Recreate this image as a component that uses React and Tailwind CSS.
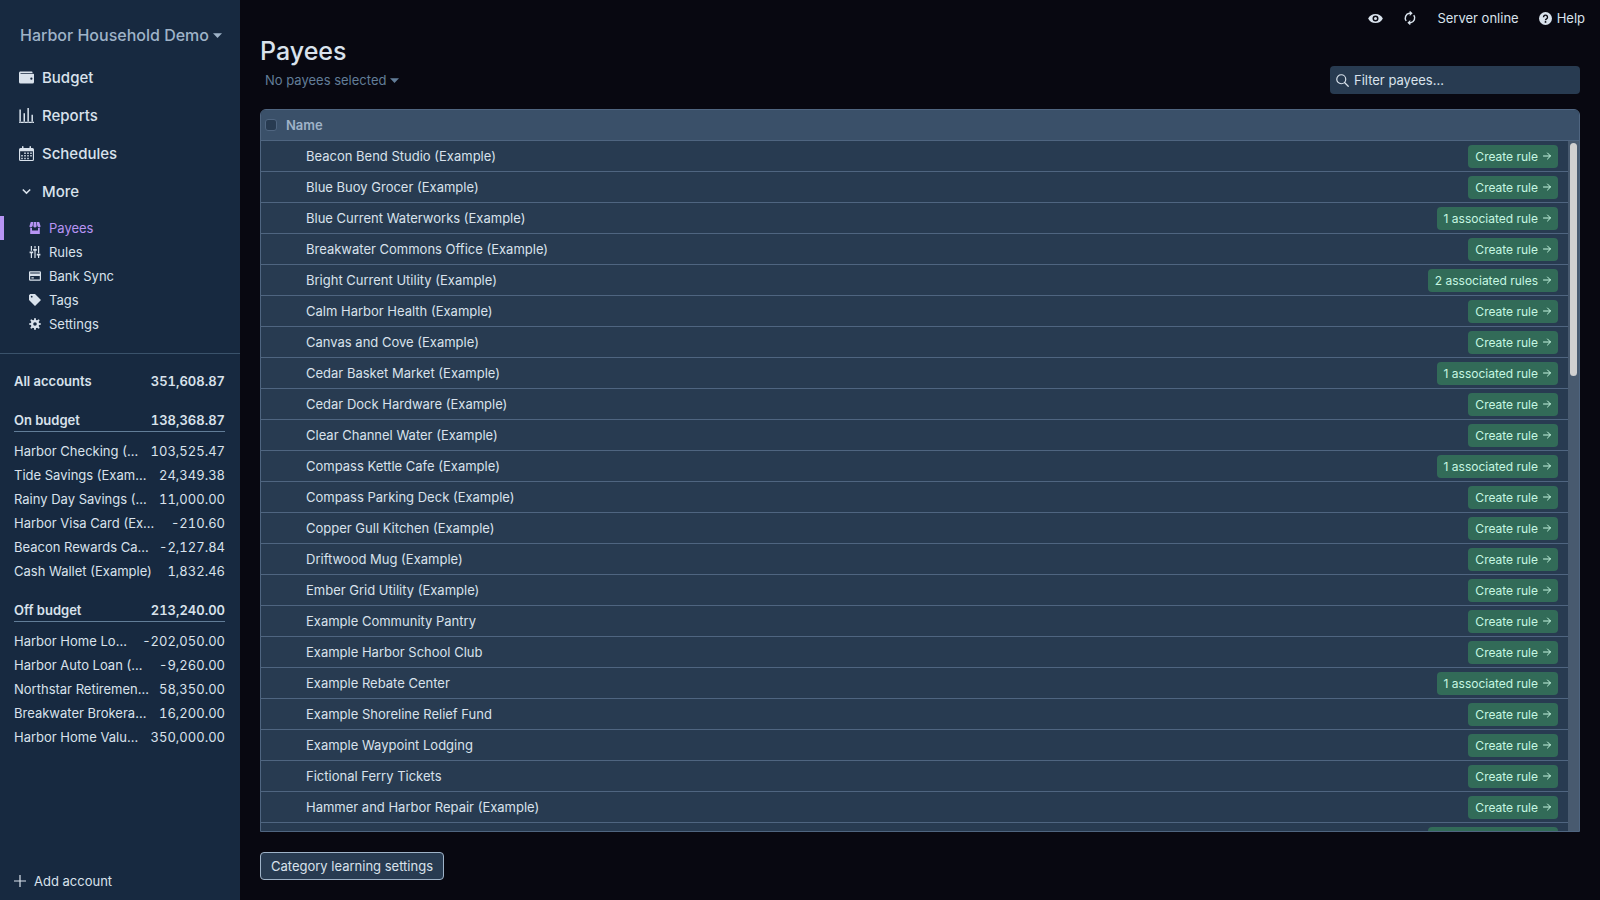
const icons = {
  wallet:
    'M0 4c0-1.1.9-2 2-2h15a1 1 0 0 1 1 1v1H2v1h17a1 1 0 0 1 1 1v10a2 2 0 0 1-2 2H2a2 2 0 0 1-2-2V4zm16.5 9a1.5 1.5 0 1 0 0-3 1.5 1.5 0 0 0 0 3z',
  reports:
    'M0 18.200h20V20H0zM.5 2h2v17h-2zM6 7h2v12H6zM11.200 0h2v19h-2zM16.600 9h2v10h-2z',
  calendar:
    'M5 0a1 1 0 0 1 1 1v1.500h8V1a1 1 0 0 1 2 0v1.500h2a2 2 0 0 1 2 2V18a2 2 0 0 1-2 2H2a2 2 0 0 1-2-2V4.500a2 2 0 0 1 2-2h2V1a1 1 0 0 1 1-1zM1.500 7v11a.5.5 0 0 0 .5.5h16a.5.5 0 0 0 .5-.5V7zM7 8.500h2v2H7zM11 8.500h2v2h-2zM15 8.500h2v2h-2zM3 12h2v2H3zM7 12h2v2H7zM11 12h2v2h-2zM15 12h2v2h-2zM3 15.500h2v2H3zM7 15.500h2v2H7zM11 15.500h2v2h-2z',
  chevron: 'M9.293 12.95l.707.707L15.657 8l-1.414-1.414L10 10.828 5.757 6.586 4.343 8z',
  store:
    'M18 9.87V20H2V9.87a4.25 4.25 0 0 0 3-.38V14h10V9.5a4.26 4.26 0 0 0 3 .37zM3 0h4l-.67 6.03A3.43 3.43 0 0 1 3 9C1.34 9 .42 7.73.95 6.15L3 0zm5 0h4l.7 6.3c.17 1.5-.91 2.7-2.42 2.7h-.56A2.38 2.38 0 0 1 7.3 6.3L8 0zm5 0h4l2.05 6.15C19.58 7.73 18.65 9 17 9a3.42 3.42 0 0 1-3.33-2.97L13 0z',
  tuning:
    'M17 16v4h-2v-4h-2v-3h6v3h-2zM1 9h6v3H1V9zm6-4h6v3H7V5zM3 0h2v8H3V0zm12 0h2v12h-2V0zM9 0h2v4H9V0zM3 12h2v8H3v-8zm6-4h2v12H9V8z',
  card: 'M18 6V4H2v2h16zm0 4H2v6h16v-6zM0 4c0-1.1.9-2 2-2h16a2 2 0 0 1 2 2v12a2 2 0 0 1-2 2H2a2 2 0 0 1-2-2V4zm4 8h4v2H4v-2z',
  tag: 'M0 10V2l2-2h8l10 10-10 10L0 10zm4.5-4a1.5 1.5 0 1 0 0-3 1.5 1.5 0 0 0 0 3z',
  cog: 'M3.94 6.5L2.22 3.64l1.42-1.42L6.5 3.94c.52-.3 1.1-.54 1.7-.7L9 0h2l.8 3.24c.6.16 1.18.4 1.7.7l2.86-1.72 1.42 1.42-1.72 2.86c.3.52.54 1.1.7 1.7L20 9v2l-3.24.8c-.16.6-.4 1.18-.7 1.7l1.72 2.86-1.42 1.42-2.86-1.72c-.52.3-1.1.54-1.7.7L11 20H9l-.8-3.24c-.6-.16-1.18-.4-1.7-.7l-2.86 1.72-1.42-1.42 1.72-2.86c-.3-.52-.54-1.1-.7-1.7L0 11V9l3.24-.8c.16-.6.4-1.18.7-1.7zM10 13a3 3 0 1 0 0-6 3 3 0 0 0 0 6z',
  eye: 'M.2 10a11 11 0 0 1 19.6 0A11 11 0 0 1 .2 10zm9.8 4a4 4 0 1 0 0-8 4 4 0 0 0 0 8zm0-2a2 2 0 1 1 0-4 2 2 0 0 1 0 4z',
  plus: 'M9 0h2v9h9v2h-9v9H9v-9H0V9h9z',
  caret: 'M0 5h20L10 15.500z',
};

function Icon({ name, className }) {
  return (
    <svg viewBox="0 0 20 20" fill="currentColor" fillRule="evenodd" aria-hidden="true" className={`shrink-0 ${className}`}>
      <path d={icons[name]} />
    </svg>
  );
}

function SyncIcon() {
  return (
    <svg viewBox="0 0 24 24" fill="none" stroke="currentColor" strokeWidth="2.600" aria-hidden="true" className="size-[14px] shrink-0">
      <path d="M5.500 17A8.200 8.200 0 0 1 11 4H13M18.500 7A8.200 8.200 0 0 1 13 20H11" />
      <path d="M11.500 -.5l5 4.500-5 4.500zM12.500 15.500l-5 4.500 5 4.500z" fill="currentColor" stroke="none" />
    </svg>
  );
}

function HelpIcon() {
  return (
    <svg viewBox="0 0 24 24" aria-hidden="true" className="size-[13px] shrink-0">
      <circle cx="12" cy="12" r="12" fill="currentColor" />
      <path d="M8.300 9.500a3.700 3.700 0 1 1 5.600 3.200c-1.200.7-1.900 1.300-1.900 2.600" fill="none" stroke="#080811" strokeWidth="2.600" />
      <circle cx="12" cy="18.300" r="1.700" fill="#080811" />
    </svg>
  );
}

function SearchIcon() {
  return (
    <svg viewBox="0 0 26 26" fill="none" stroke="currentColor" strokeWidth="2.400" strokeLinecap="round" aria-hidden="true" className="size-[13px] shrink-0">
      <circle cx="10.500" cy="10.500" r="9" />
      <path d="M17 17l7.500 7.500" />
    </svg>
  );
}

function ArrowIcon() {
  return (
    <svg viewBox="0 0 16 16" fill="none" stroke="currentColor" strokeWidth="2" strokeLinecap="round" strokeLinejoin="round" aria-hidden="true" className="size-[8px] shrink-0">
      <path d="M1 8h14M9 2l6 6-6 6" />
    </svg>
  );
}

const mainNav = [
  ['wallet', 'Budget'],
  ['reports', 'Reports'],
  ['calendar', 'Schedules'],
];

const moreNav = [
  ['store', 'Payees'],
  ['tuning', 'Rules'],
  ['card', 'Bank Sync'],
  ['tag', 'Tags'],
  ['cog', 'Settings'],
];

const groups = [
  {
    name: 'On budget',
    total: '138,368.87',
    accounts: [
      ['Harbor Checking (Example)', '103,525.47'],
      ['Tide Savings (Example)', '24,349.38'],
      ['Rainy Day Savings (Example)', '11,000.00'],
      ['Harbor Visa Card (Example)', '-210.60'],
      ['Beacon Rewards Card (Example)', '-2,127.84'],
      ['Cash Wallet (Example)', '1,832.46'],
    ],
  },
  {
    name: 'Off budget',
    total: '213,240.00',
    accounts: [
      ['Harbor Home Loan (Example)', '-202,050.00'],
      ['Harbor Auto Loan (Example)', '-9,260.00'],
      ['Northstar Retirement (Example)', '58,350.00'],
      ['Breakwater Brokerage (Example)', '16,200.00'],
      ['Harbor Home Value (Example)', '350,000.00'],
    ],
  },
];

const payees = [
  ['Beacon Bend Studio (Example)', 0],
  ['Blue Buoy Grocer (Example)', 0],
  ['Blue Current Waterworks (Example)', 1],
  ['Breakwater Commons Office (Example)', 0],
  ['Bright Current Utility (Example)', 2],
  ['Calm Harbor Health (Example)', 0],
  ['Canvas and Cove (Example)', 0],
  ['Cedar Basket Market (Example)', 1],
  ['Cedar Dock Hardware (Example)', 0],
  ['Clear Channel Water (Example)', 0],
  ['Compass Kettle Cafe (Example)', 1],
  ['Compass Parking Deck (Example)', 0],
  ['Copper Gull Kitchen (Example)', 0],
  ['Driftwood Mug (Example)', 0],
  ['Ember Grid Utility (Example)', 0],
  ['Example Community Pantry', 0],
  ['Example Harbor School Club', 0],
  ['Example Rebate Center', 1],
  ['Example Shoreline Relief Fund', 0],
  ['Example Waypoint Lodging', 0],
  ['Fictional Ferry Tickets', 0],
  ['Hammer and Harbor Repair (Example)', 0],
  ['', 2],
];

function ruleLabel(count) {
  if (count === 0) return 'Create rule';
  return count === 1 ? '1 associated rule' : `${count} associated rules`;
}

function AccountRow({ name, amount, className }) {
  return (
    <a href="#" className={`flex items-center gap-[10px] pt-0.5 pr-[15px] pl-[14px] ${className}`}>
      <span className="min-w-0 flex-1 truncate">{name}</span>
      <span className="tabular-nums">{amount}</span>
    </a>
  );
}

function Sidebar() {
  return (
    <aside className="flex w-60 shrink-0 flex-col bg-[#172940] text-[#d9e2ec]">
      <button type="button" className="mt-[23px] flex h-6 items-center gap-1 self-start px-5 text-base font-medium text-[#9fb3c8]">
        <span className="whitespace-nowrap">Harbor Household Demo</span>
        <Icon name="caret" className="size-[9px]" />
      </button>
      <nav className="mt-3 flex flex-col">
        {mainNav.map(([icon, label]) => (
          <a key={label} href="#" className="flex h-[38px] items-center gap-2 px-[19px] text-[15px] font-medium">
            <Icon name={icon} className="mb-px size-[15px]" />
            {label}
          </a>
        ))}
        <button type="button" className="flex h-[38px] items-center gap-2 px-[19px] text-[15px] font-medium">
          <Icon name="chevron" className="mb-px size-[15px]" />
          More
        </button>
        <div className="mt-[5px] flex flex-col">
          {moreNav.map(([icon, label]) => (
            <a
              key={label}
              href="#"
              className={`flex h-6 items-center gap-2 border-l-4 pl-[25px] text-[13px] ${
                label === 'Payees' ? 'border-[#b794f4] text-[#b794f4]' : 'border-transparent'
              }`}
            >
              <Icon name={icon} className="size-[12px]" />
              <span className="pt-0.5">{label}</span>
            </a>
          ))}
        </div>
      </nav>
      <div className="mt-[17px] border-t border-[#3a526b] pt-[15px] text-[13px]">
        <AccountRow name="All accounts" amount="351,608.87" className="h-6 font-semibold" />
        {groups.map((group) => (
          <section key={group.name} className="mt-[15px]">
            <AccountRow name={group.name} amount={group.total} className="h-[23px] font-semibold" />
            <div className="mr-[15px] mb-[7px] ml-[14px] border-t border-[#627d98]" />
            {group.accounts.map(([name, amount]) => (
              <AccountRow key={name} name={name} amount={amount} className="h-6" />
            ))}
          </section>
        ))}
      </div>
      <button type="button" className="mt-auto mb-[7px] flex h-6 items-center gap-2 self-start px-[14px] text-[13px]">
        <Icon name="plus" className="size-[12px]" />
        <span className="pt-0.5">Add account</span>
      </button>
    </aside>
  );
}

function PayeeTable() {
  return (
    <div className="relative flex min-h-0 flex-1 flex-col overflow-hidden rounded-t-md border border-[#4f6580] bg-[#283b51]">
      <table className="flex min-h-0 flex-1 flex-col text-left text-[13px]">
        <thead className="block">
          <tr className="flex h-[31px] items-center border-b border-[#4f6580] bg-[#3a5069] text-[#9fb3c8]">
            <th className="flex w-[25px] pl-[4px]">
              <input
                type="checkbox"
                aria-label="Select all payees"
                className="size-[12px] appearance-none rounded-[3px] border border-[#4f6580] bg-[#283b51]"
              />
            </th>
            <th className="pt-0.5 font-semibold">Name</th>
          </tr>
        </thead>
        <tbody className="block min-h-0 flex-1 overflow-hidden pr-[11px] text-[#d9e2ec]">
          {payees.map(([name, count]) => (
            <tr key={name} className="flex h-[31px] items-center border-b border-[#4f6580] pr-[10px] pl-[45px]">
              <td className="min-w-0 flex-1 truncate pt-0.5">{name}</td>
              <td>
                <button
                  type="button"
                  className="flex h-[23px] items-center gap-[5px] rounded bg-[#326b58] px-[7px] text-[12px] text-[#c6f7e2]"
                >
                  <span className="pt-0.5">{ruleLabel(count)}</span>
                  <ArrowIcon />
                </button>
              </td>
            </tr>
          ))}
        </tbody>
      </table>
      <div className="absolute top-[31px] right-0 bottom-0 w-[11px] bg-[#485a6f] px-[2px] pt-[2px]">
        <div className="h-[233px] rounded-full bg-[#d0d0d0]" />
      </div>
    </div>
  );
}

export default function App() {
  return (
    <div className="flex h-screen bg-[#080811] font-['Inter',sans-serif] text-[13px] text-[#d9e2ec]">
      <Sidebar />
      <main className="flex min-w-0 flex-1 flex-col px-5 pb-5">
        <header className="-mr-[5px] flex h-9 items-center justify-end text-[13px]">
          <button type="button" aria-label="Privacy mode" className="mr-5">
            <Icon name="eye" className="size-[15px]" />
          </button>
          <button type="button" aria-label="Sync" className="mr-5">
            <SyncIcon />
          </button>
          <button type="button" className="mr-5 pt-0.5">Server online</button>
          <button type="button" className="flex items-center gap-[5px]">
            <HelpIcon />
            <span className="pt-0.5">Help</span>
          </button>
        </header>
        <h1 className="h-[30px] text-[25px] leading-[30px] font-medium">Payees</h1>
        <div className="mb-[15px] flex h-7 items-center justify-between">
          <button type="button" className="flex items-center gap-1 pl-[5px] text-[#627d98]">
            <span className="pt-0.5">No payees selected</span>
            <Icon name="caret" className="size-[9px]" />
          </button>
          <label className="flex h-7 w-[250px] items-center gap-[5px] rounded bg-[#283b51] px-[6px]">
            <SearchIcon />
            <input
              type="text"
              aria-label="Filter payees"
              placeholder="Filter payees..."
              className="min-w-0 flex-1 bg-transparent pt-0.5 outline-none placeholder:text-[#d9e2ec]"
            />
          </label>
        </div>
        <PayeeTable />
        <button type="button" className="mt-5 h-7 self-start rounded border border-[#9fb3c8] bg-[#283b51] px-[10px] pt-0.5">
          Category learning settings
        </button>
      </main>
    </div>
  );
}
